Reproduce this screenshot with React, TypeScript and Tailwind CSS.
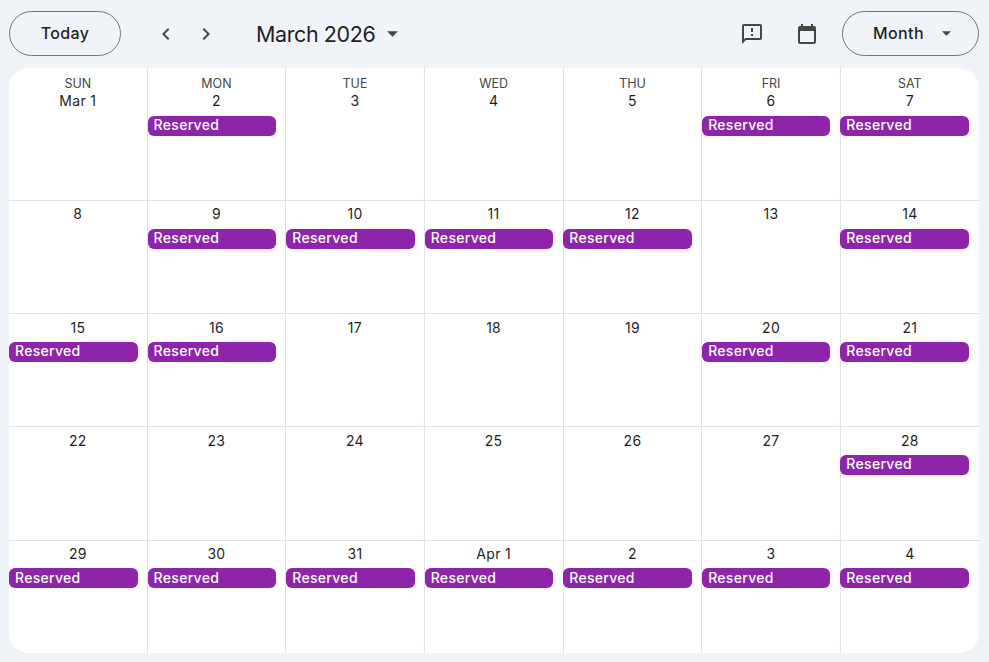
import React from 'react';

const WEEKDAYS = ['SUN', 'MON', 'TUE', 'WED', 'THU', 'FRI', 'SAT'];

// [date label, has reservation]
const DAYS: [string, boolean][] = [
  ['Mar 1', false], ['2', true], ['3', false], ['4', false], ['5', false], ['6', true], ['7', true],
  ['8', false], ['9', true], ['10', true], ['11', true], ['12', true], ['13', false], ['14', true],
  ['15', true], ['16', true], ['17', false], ['18', false], ['19', false], ['20', true], ['21', true],
  ['22', false], ['23', false], ['24', false], ['25', false], ['26', false], ['27', false], ['28', true],
  ['29', true], ['30', true], ['31', true], ['Apr 1', true], ['2', true], ['3', true], ['4', true],
];

const Caret = ({ small }: { small?: boolean }) => (
  <svg width={small ? 9 : 11} height={small ? 5 : 6} viewBox="0 0 10 5" className="fill-[#444746]">
    <path d="M0 0h10L5 5z" />
  </svg>
);

const Chevron = ({ left }: { left?: boolean }) => (
  <svg width="24" height="24" viewBox="0 0 24 24" className="fill-[#444746]">
    <path d={left ? 'M15.4 7.4 14 6l-6 6 6 6 1.4-1.4L10.8 12z' : 'M8.6 7.4 10 6l6 6-6 6-1.4-1.4 4.6-4.6z'} />
  </svg>
);

const App = () => {
  return (
    <div className="w-[989px] h-[662px] bg-[#f0f4f9] pl-[9px] pr-[10px] text-[#1f1f1f] font-['Inter','Roboto',sans-serif] overflow-hidden">
      <header className="h-[68px] flex items-center">
        <button className="w-[112px] h-[45px] mb-[1px] pb-[1px] rounded-full border border-[#747775] text-[16px] font-medium tracking-[0.3px]">Today</button>
        <div className="flex items-center gap-[16px] ml-[33px]">
          <Chevron left />
          <Chevron />
        </div>
        <span className="ml-[38px] text-[21.5px] leading-[32px] tracking-[-0.4px]">March 2026</span>
        <span className="ml-[12px] flex"><Caret /></span>
        <div className="ml-auto flex items-center">
          <svg width="24" height="24" viewBox="0 0 24 24" className="fill-[#444746]">
            <path d="M20 2H4c-1.1 0-2 .9-2 2v18l4-4h14c1.1 0 2-.9 2-2V4c0-1.1-.9-2-2-2zm0 14H5.2L4 17.2V4h16v12zM11 12h2v2h-2zm0-6h2v4h-2z" />
          </svg>
          <svg width="24" height="24" viewBox="0 0 24 24" className="ml-[31px] fill-[#444746]">
            <path d="M19 4h-1V2h-2v2H8V2H6v2H5c-1.1 0-2 .9-2 2v14c0 1.1.9 2 2 2h14c1.1 0 2-.9 2-2V6c0-1.1-.9-2-2-2zm0 16H5V9h14v11z" />
          </svg>
          <button className="ml-[23px] w-[137px] h-[45px] mb-[1px] pb-[2px] rounded-full border border-[#747775] flex items-center pl-[30px] text-[16px] font-medium tracking-[0.4px]">
            Month
            <span className="ml-[18px] mt-[2px] flex"><Caret small /></span>
          </button>
        </div>
      </header>

      <div className="w-[970px] h-[585px] bg-white rounded-[20px] overflow-hidden grid grid-cols-[138.6px_138.7px_138.4px_138.9px_138.9px_138.2px_1fr] grid-rows-[132.8px_113.5px_113.2px_113.1px_1fr]">
        {DAYS.map(([label, reserved], i) => (
          <div
            key={i}
            className={`flex flex-col border-[#dde3ee] ${i % 7 !== 6 ? 'border-r' : ''} ${i < 28 ? 'border-b' : ''}`}
          >
            {i < 7 && (
              <span className="h-[16px] mt-[7.5px] text-center text-[12.5px] leading-[16px] text-[#444746]">{WEEKDAYS[i]}</span>
            )}
            <span className={`h-[20px] ${i < 7 ? '-mt-[0.5px]' : 'mt-[3.3px]'} text-center text-[14px] leading-[20px] tracking-[0.3px]`}>{label}</span>
            {reserved && (
              <div
                className={`${i < 7 ? 'mt-[5px]' : 'mt-[4.5px]'} ${i % 7 >= 4 ? '-ml-[0.3px]' : ''} ${i % 7 === 5 ? 'w-[128.2px]' : 'w-[128.6px]'} ${i >= 28 ? 'leading-[19px]' : 'leading-[18px]'} h-[20px] rounded-[6px] bg-[#8e24aa] pl-[6px] text-[14px] tracking-[0.3px] font-medium text-white`}
              >
                Reserved
              </div>
            )}
          </div>
        ))}
      </div>
    </div>
  );
};

export default App;
